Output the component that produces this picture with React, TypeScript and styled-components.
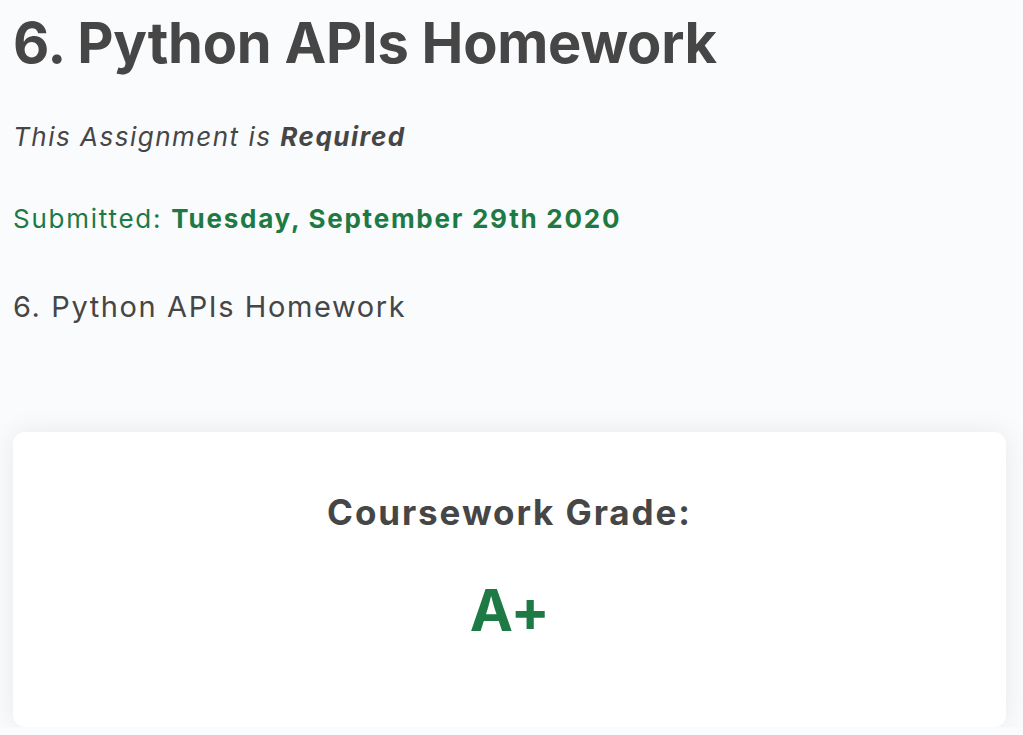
import React from "react";
import styled, { createGlobalStyle } from "styled-components";

const Global = createGlobalStyle`
  html, body { margin: 0; padding: 0; background: #fafbfd; }
  body { font-family: Inter, "Noto Sans", sans-serif; color: #464646; }
`;

const Page = styled.main`
  padding: 0 17px 0 13px;
  display: flex;
  flex-direction: column;
`;

const Title = styled.h1`
  margin: 11px 0 0;
  font-size: 56px;
  font-weight: 700;
  line-height: 64px;
  color: #464646;
  letter-spacing: -0.25px;
`;

const Required = styled.p`
  margin: 46px 0 0;
  font-size: 26px;
  font-style: italic;
  line-height: 32px;
  letter-spacing: 1.5px;
  strong { font-weight: 700; }
`;

const Submitted = styled.p`
  margin: 50px 0 0;
  font-size: 26px;
  line-height: 32px;
  letter-spacing: 1.75px;
  color: #1d7a45;
  strong { font-weight: 700; }
`;

const Description = styled.p`
  margin: 54px 0 0;
  font-size: 29px;
  line-height: 36px;
  letter-spacing: 1.6px;
`;

const Card = styled.section`
  margin-top: 107px;
  background: #ffffff;
  border-radius: 12px;
  box-shadow: 0 0 28px rgba(0, 0, 0, 0.08);
  height: 295px;
  display: flex;
  flex-direction: column;
  align-items: center;
`;

const CardTitle = styled.h2`
  margin: 60px 0 0;
  font-size: 35px;
  font-weight: 700;
  line-height: 40px;
  letter-spacing: 1.9px;
`;

const Grade = styled.div`
  margin-top: 46px;
  font-size: 58px;
  font-weight: 700;
  line-height: 64px;
  letter-spacing: -0.5px;
  color: #1d7a45;
`;

export default function App() {
  return (
    <>
      <Global />
      <Page>
        <Title>6. Python APIs Homework</Title>
        <Required>
          This Assignment is <strong>Required</strong>
        </Required>
        <Submitted>
          Submitted: <strong>Tuesday, September 29th 2020</strong>
        </Submitted>
        <Description>6. Python APIs Homework</Description>
        <Card>
          <CardTitle>Coursework Grade:</CardTitle>
          <Grade>A+</Grade>
        </Card>
      </Page>
    </>
  );
}
